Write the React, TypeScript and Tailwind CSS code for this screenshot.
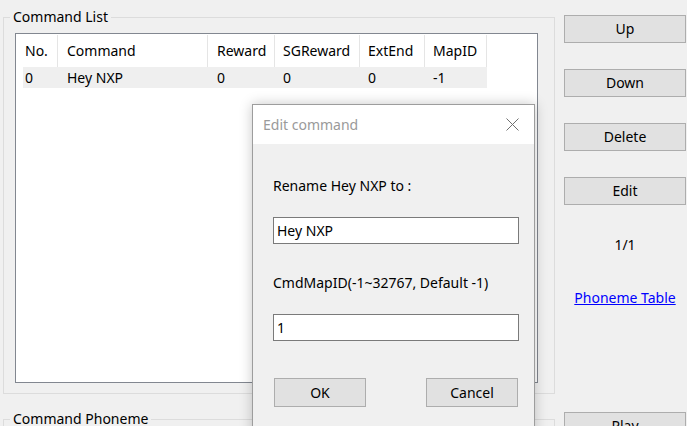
const columns = [
  { title: "No.", width: "w-[35px]", pad: "pl-[2px]" },
  { title: "Command", width: "w-[150px]", pad: "pl-[9px]" },
  { title: "Reward", width: "w-[67px]", pad: "pl-[9px]" },
  { title: "SGReward", width: "w-[85px]", pad: "pl-[8px]" },
  { title: "ExtEnd", width: "w-[65px]", pad: "pl-[8px]" },
  { title: "MapID", width: "w-[62px]", pad: "pl-[8px]" },
];

const row = ["0", "Hey NXP", "0", "0", "0", "-1"];

function WinButton({ label, className = "" }: { label: string; className?: string }) {
  return (
    <button
      className={`flex h-[28px] items-center justify-center border border-[#adadad] bg-[#e1e1e1] text-black ${className}`}
    >
      {label}
    </button>
  );
}

export default function App() {
  return (
    <div className="relative h-[426px] w-[687px] overflow-hidden bg-[#f0f0f0] font-['Noto_Sans',sans-serif] text-[14px] leading-[20px] text-black">
      <div className="flex pl-[3px]">
        {/* Left: group boxes */}
        <div className="flex w-[552px] flex-col">
          <div className="relative mt-[17px] h-[377px] border border-[#dcdcdc]">
            <span className="absolute -top-[11px] left-[6px] bg-[#f0f0f0] px-[3px]">Command List</span>
            <div className="ml-[11px] mt-[15px] h-[350px] w-[523px] border border-[#828790] bg-white pl-[7px]">
              <div className="flex h-[33px] pt-[1px]">
                {columns.map((c) => (
                  <div key={c.title} className={`flex items-center border-r border-[#e5e5e5] ${c.width} ${c.pad}`}>
                    {c.title}
                  </div>
                ))}
              </div>
              <div className="flex h-[21px] w-[464px] bg-[#efefef]">
                {columns.map((c, i) => (
                  <div key={c.title} className={`flex items-center ${c.width} ${c.pad}`}>
                    {row[i]}
                  </div>
                ))}
              </div>
            </div>
          </div>

          <div className="relative mt-[25px] h-[40px] border border-[#dcdcdc]">
            <span className="absolute -top-[11px] left-[6px] bg-[#f0f0f0] px-[3px]">Command Phoneme</span>
          </div>
        </div>

        {/* Right: buttons */}
        <div className="ml-[9px] flex w-[122px] flex-col pt-[15px]">
          <div className="flex flex-col gap-[26px]">
            <WinButton label="Up" />
            <WinButton label="Down" />
            <WinButton label="Delete" />
            <WinButton label="Edit" />
          </div>
          <div className="mt-[30px] text-center">1/1</div>
          <a className="mt-[33px] text-center text-[#0000ff] underline">Phoneme Table</a>
          <WinButton label="Play" className="mt-[104px]" />
        </div>
      </div>

      {/* Edit command dialog */}
      <div className="absolute left-[252px] top-[104px] w-[283px] border border-[#9d9d9d] bg-[#f0f0f0] shadow-[0_0_12px_rgba(0,0,0,0.22)]">
        <div className="flex h-[39px] items-center justify-between bg-white pl-[10px] pr-[15px] text-[#9a9a9a]">
          <span>Edit command</span>
          <svg width="13" height="13" viewBox="0 0 13 13" className="text-[#707070]">
            <path d="M0.5 0.5 L12.5 12.5 M12.5 0.5 L0.5 12.5" stroke="currentColor" strokeWidth="1" fill="none" />
          </svg>
        </div>
        <div className="flex flex-col pb-[40px] pl-[20px] pr-[15px]">
          <div className="mt-[32px]">Rename Hey NXP to :</div>
          <div className="mt-[21px] flex h-[27px] items-center border border-[#7a7a7a] bg-white pl-[3px]">
            Hey NXP
          </div>
          <div className="mt-[29px]">CmdMapID(-1~32767, Default -1)</div>
          <div className="mt-[21px] flex h-[27px] items-center border border-[#7a7a7a] bg-white pl-[3px]">
            1
          </div>
          <div className="mt-[37px] flex justify-between px-[1px]">
            <WinButton label="OK" className="h-[29px] w-[92px]" />
            <WinButton label="Cancel" className="h-[29px] w-[92px]" />
          </div>
        </div>
      </div>
    </div>
  );
}
